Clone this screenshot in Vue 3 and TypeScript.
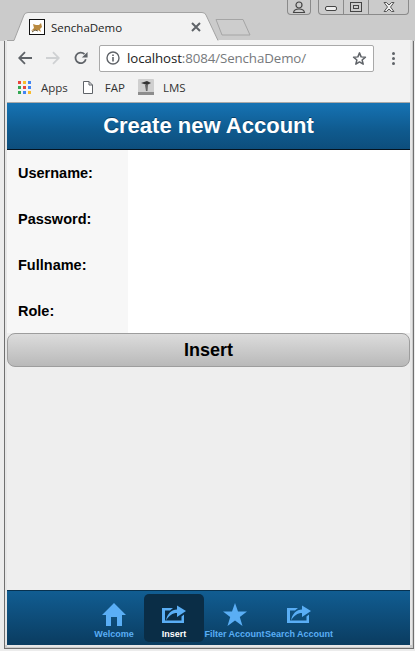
<script setup lang="ts">
const fields = ['Username:', 'Password:', 'Fullname:', 'Role:']
const appsColors = ['#e8453c', '#f9bb2d', '#4285f4', '#34a853', '#e8453c', '#4285f4', '#34a853', '#4285f4', '#f9bb2d']

const tabs = [
  { label: 'Welcome', icon: 'home', width: 60 },
  { label: 'Insert', icon: 'share', width: 60, active: true },
  { label: 'Filter Account', icon: 'star', width: 61 },
  { label: 'Search Account', icon: 'share', width: 68 }
]
</script>

<template>
  <div class="window">
    <div class="strip">
      <svg class="tab-shape" width="260" height="41" viewBox="0 0 260 41">
        <path d="M7 40.5H14L24 15Q25 12.5 28 12.5H202Q205 12.5 206 15L218 40.5" fill="#f2f2f2" stroke="#a3a3a3" />
        <path d="M216 19.5H243L250 35H222Z" fill="#cdcdcd" stroke="#a5a5a5" />
      </svg>
      <div class="tab-content">
        <svg class="favicon" width="16" height="16" viewBox="0 0 16 16">
          <rect x="0.5" y="0.5" width="15" height="15" fill="#fff" stroke="#111" />
          <path d="M2 12L5 9L4 5L7 6H10L12 4L13 8L11 10L12 13L9 11L6 11Z" fill="#b9893f" />
          <path d="M3 13L6 11L9 12" stroke="#6b5a36" fill="none" />
        </svg>
        <span class="tab-title">SenchaDemo</span>
        <svg class="tab-close" width="10" height="10" viewBox="0 0 10 10">
          <path d="M1 1L9 9M9 1L1 9" stroke="#5f6368" stroke-width="2" />
        </svg>
      </div>
      <div class="controls">
        <div class="ctl-user">
          <svg width="14" height="13" viewBox="0 0 14 13">
            <circle cx="7" cy="4" r="3" fill="none" stroke="#444" stroke-width="1.2" />
            <path d="M1.5 11.5C2 8.5 4 8 7 8S12 8.5 12.5 11.5Z" fill="none" stroke="#444" stroke-width="1.2" />
          </svg>
        </div>
        <div class="ctl-group">
          <div class="ctl ctl-min">
            <svg width="12" height="6" viewBox="0 0 12 6"><rect x="0.5" y="0.5" width="11" height="4" rx="1.5" fill="#eee" stroke="#444" /></svg>
          </div>
          <div class="ctl ctl-max">
            <svg width="12" height="10" viewBox="0 0 12 10"><rect x="0.5" y="0.5" width="11" height="9" fill="none" stroke="#444" /><rect x="3.5" y="3.5" width="5" height="3" fill="none" stroke="#444" /></svg>
          </div>
          <div class="ctl ctl-close">
            <svg width="12" height="10" viewBox="0 0 12 10"><path d="M1 0.5H3.5L6 3L8.5 0.5H11L7.5 5L11 9.5H8.5L6 7L3.5 9.5H1L4.5 5Z" fill="#eee" stroke="#555" /></svg>
          </div>
        </div>
      </div>
    </div>

    <div class="browser">
      <div class="toolbar">
        <svg width="14" height="14" viewBox="0 0 14 14"><path d="M14 7H1.5M7 1.2L1.2 7L7 12.8" fill="none" stroke="#5f6368" stroke-width="1.8" /></svg>
        <svg class="forward" width="14" height="14" viewBox="0 0 14 14"><path d="M0 7H12.5M7 1.2L12.8 7L7 12.8" fill="none" stroke="#cfd1d3" stroke-width="1.8" /></svg>
        <svg class="reload" width="14" height="14" viewBox="0 0 16 16">
          <path d="M13.5 9.5A6 6 0 1 1 12 3.7" fill="none" stroke="#5f6368" stroke-width="2" />
          <path d="M15.5 1V7.5H9Z" fill="#5f6368" />
        </svg>
        <div class="omnibox">
          <svg width="14" height="14" viewBox="0 0 14 14">
            <circle cx="7" cy="7" r="6" fill="none" stroke="#5f6368" stroke-width="1.4" />
            <path d="M7 6V10.5M7 3.4V5" stroke="#5f6368" stroke-width="1.6" />
          </svg>
          <span class="url"><b>localhost</b>:8084/SenchaDemo/</span>
          <svg class="url-star" width="15" height="15" viewBox="0 0 24 24">
            <path d="M12 3L14.6 9.4L21.5 9.9L16.2 14.4L17.9 21.1L12 17.5L6.1 21.1L7.8 14.4L2.5 9.9L9.4 9.4Z" fill="none" stroke="#5f6368" stroke-width="2.4" stroke-linejoin="round" />
          </svg>
        </div>
        <div class="menu-dots"><i></i><i></i><i></i></div>
      </div>
      <div class="bookmarks">
        <div class="apps-grid"><i v-for="(c, n) in appsColors" :key="n" :style="{ background: c }"></i></div>
        <span class="bm-label bm-apps">Apps</span>
        <svg class="bm-doc" width="10" height="13" viewBox="0 0 10 13"><path d="M0.5 0.5H6L9.5 4V12.5H0.5ZM6 0.5V4H9.5" fill="#fff" stroke="#5f6368" /></svg>
        <span class="bm-label bm-fap">FAP</span>
        <svg class="bm-lms" width="16" height="16" viewBox="0 0 16 16">
          <rect width="16" height="16" rx="1" fill="#cfcfcf" />
          <path d="M3 4L9 2L13 4L9 6Z" fill="#333" />
          <path d="M7 6H10L9.5 12H8Z" fill="#666" />
          <rect y="13" width="16" height="3" fill="#8d8d8d" />
        </svg>
        <span class="bm-label">LMS</span>
      </div>

      <div class="app">
        <header class="titlebar">Create new Account</header>
        <form class="form" @submit.prevent>
          <div v-for="f in fields" :key="f" class="row">
            <label class="label">{{ f }}</label>
            <div class="input"></div>
          </div>
        </form>
        <button class="insert-btn" type="button">Insert</button>
        <div class="spacer"></div>
        <nav class="tabbar">
          <div
            v-for="t in tabs"
            :key="t.label"
            class="tabitem"
            :class="{ active: t.active }"
            :style="{ width: t.width + 'px' }"
          >
            <svg v-if="t.icon === 'home'" width="24" height="23" viewBox="0 0 24 23">
              <path d="M12 0L24 12H20V23H15V14H9V23H4V12H0Z" fill="#5aaef5" />
            </svg>
            <svg v-else-if="t.icon === 'star'" width="24" height="23" viewBox="0 0 24 23">
              <path d="M12 0L15 8.5H24L16.8 14L19.5 23L12 17.6L4.5 23L7.2 14L0 8.5H9Z" fill="#5aaef5" />
            </svg>
            <svg v-else class="share" width="24" height="18" viewBox="0 0 24 18">
              <path d="M0 3H11L8 5.5H3V15.5H19.5V11.5L22 9.5V18H0Z" fill="#5aaef5" />
              <path d="M4 15.5C5 9 9.5 4.5 15 4.5V0.5L24 6L15 12V8C10.5 8 7 10.5 4 15.5Z" fill="#5aaef5" />
            </svg>
            <span class="tablabel">{{ t.label }}</span>
          </div>
        </nav>
      </div>
    </div>
  </div>
</template>

<style>
html, body { margin: 0; padding: 0; background: #ccc; overflow: hidden; }
</style>

<style scoped>
.window {
  width: 415px;
  height: 651px;
  background: #cbcbcb;
  display: flex;
  flex-direction: column;
  overflow: hidden;
  box-sizing: border-box;
  font-family: "Liberation Sans", Arial, sans-serif;
  position: relative;
}
/* thin outer window edge, desktop shows outside of it */
.window::after {
  content: "";
  position: absolute;
  left: 4px;
  right: 1px;
  top: 41px;
  bottom: 2px;
  border: 1px solid #6f6f6f;
  border-top: none;
  box-shadow: 0 0 0 5px #ececec;
  clip-path: inset(0 -5px -5px -5px);
  pointer-events: none;
}
.strip {
  height: 40px;
  flex: none;
  position: relative;
}
.tab-shape { position: absolute; left: 0; top: 0; }
.tab-content {
  position: absolute;
  left: 29px;
  top: 19px;
  width: 172px;
  display: flex;
  align-items: center;
}
.tab-title {
  margin-left: 6px;
  font: 11.5px "Open Sans", "Liberation Sans", sans-serif;
  color: #222;
}
.tab-close { margin-left: auto; }
.controls {
  position: absolute;
  top: 0;
  right: 6px;
  display: flex;
  gap: 7px;
  height: 15px;
}
.ctl-user, .ctl-group {
  border: 1px solid #8a8a8a;
  border-top: none;
  border-radius: 0 0 4px 4px;
  display: flex;
}
.ctl-user { width: 22px; align-items: center; justify-content: center; }
.ctl { display: flex; align-items: center; justify-content: center; box-sizing: border-box; }
.ctl-min { width: 25px; border-right: 1px solid #8a8a8a; padding-top: 3px; }
.ctl-max { width: 25px; border-right: 1px solid #8a8a8a; }
.ctl-close { width: 39px; }

.browser {
  flex: 1;
  min-height: 0;
  margin: 0 5px 6px 7px;
  display: flex;
  flex-direction: column;
  background: #f2f2f2;
  box-shadow: 2px 0 0 #e6e6e6, -2px 0 0 #e6e6e6, 0 2px 0 #e6e6e6;
}
.toolbar {
  height: 34px;
  flex: none;
  display: flex;
  align-items: center;
  padding-left: 11px;
  padding-top: 2px;
  box-sizing: border-box;
}
.forward { margin-left: 14px; }
.reload { margin-left: 14px; }
.omnibox {
  margin-left: 11px;
  width: 275px;
  height: 27px;
  box-sizing: border-box;
  background: #fff;
  border: 1px solid #a9a9a9;
  border-radius: 2px;
  display: flex;
  align-items: center;
  padding-left: 6px;
}
.url {
  margin-left: 7px;
  font: 13.3px "Open Sans", "Liberation Sans", sans-serif;
  letter-spacing: -0.1px;
  color: #76797c;
}
.url b { font-weight: 400; color: #222; }
.url-star { margin-left: auto; margin-right: 6px; }
.menu-dots {
  margin-left: 18px;
  display: flex;
  flex-direction: column;
  gap: 2px;
}
.menu-dots i {
  width: 3px;
  height: 3px;
  border-radius: 50%;
  background: #5f6368;
}
.bookmarks {
  height: 28px;
  flex: none;
  display: flex;
  align-items: center;
  padding-left: 11px;
  box-sizing: border-box;
  padding-bottom: 2px;
}
.apps-grid {
  display: grid;
  grid-template-columns: repeat(3, 3px);
  grid-auto-rows: 3px;
  gap: 2px;
}
.bm-label {
  font: 11.5px "Open Sans", "Liberation Sans", sans-serif;
  color: #333;
}
.bm-apps { margin-left: 10px; }
.bm-doc { margin-left: 15px; }
.bm-fap { margin-left: 12px; }
.bm-lms { margin-left: 13px; margin-right: 9px; }

.app {
  flex: 1;
  min-height: 0;
  display: flex;
  flex-direction: column;
  background: #eeeeee;
  border-top: 1px solid #a9a9a9;
}
.titlebar {
  height: 47px;
  flex: none;
  box-sizing: border-box;
  background: linear-gradient(#1673b4, #0f5a8e 60%, #0d4e7c);
  border-bottom: 1px solid #04131f;
  color: #fff;
  font-size: 22px;
  font-weight: 700;
  display: flex;
  align-items: center;
  justify-content: center;
  text-shadow: 0 -1px 0 #0a3e63;
}
.form { background: #fff; }
.row {
  height: 46px;
  display: flex;
}
.row:last-child { height: 45px; }
.label {
  width: 121px;
  flex: none;
  box-sizing: border-box;
  padding: 15px 0 0 11px;
  background: #f7f7f7;
  font-size: 14.5px;
  font-weight: 700;
  color: #000;
}
.input { flex: 1; }
.insert-btn {
  height: 34px;
  flex: none;
  padding: 0;
  border: 1px solid #9d9d9d;
  border-radius: 8px;
  background: linear-gradient(#dcdcdc, #b9b9b9);
  color: #000;
  font-family: inherit;
  font-size: 18px;
  font-weight: 700;
}
.spacer { flex: 1; }
.tabbar {
  height: 55px;
  flex: none;
  box-sizing: border-box;
  background: linear-gradient(#115d92, #0a3c60);
  border-top: 1px solid #07314f;
  display: flex;
  justify-content: center;
  padding-top: 3px;
}
.tabitem {
  height: 48px;
  flex: none;
  display: flex;
  flex-direction: column;
  align-items: center;
  padding-top: 9px;
  box-sizing: border-box;
  border-radius: 5px;
  color: #5aaef5;
}
.tabitem.active {
  background: #0a2d46;
  color: #fff;
}
.share { margin: 2px 0 3px; }
.tablabel {
  margin-top: 3px;
  font-size: 9px;
  line-height: 10px;
  font-weight: 700;
  white-space: nowrap;
}
</style>
